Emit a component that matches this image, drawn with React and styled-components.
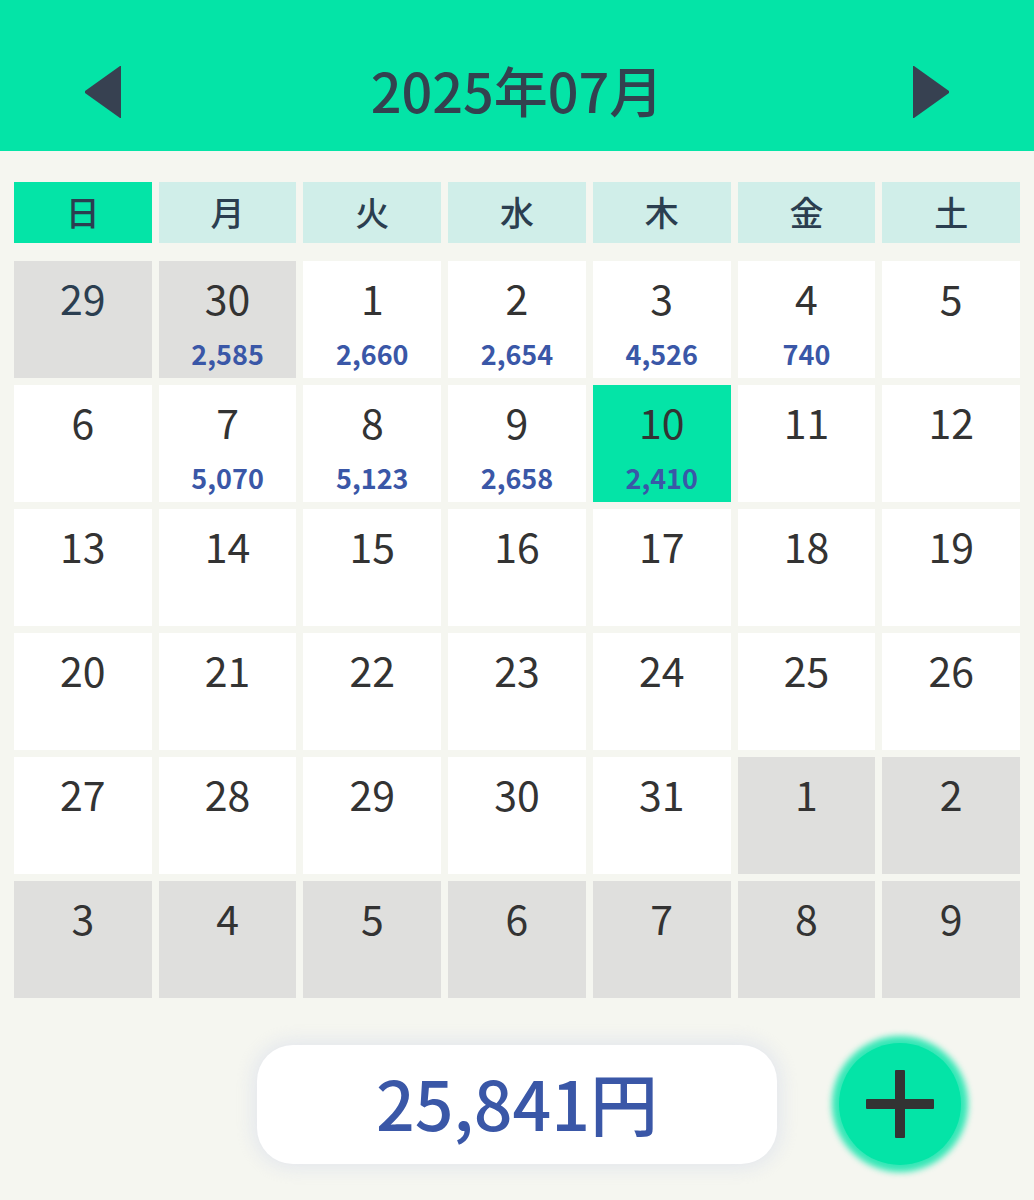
import styled, { createGlobalStyle } from "styled-components";

const GlobalStyle = createGlobalStyle`
  * {
    box-sizing: border-box;
  }
  body {
    margin: 0;
    background-color: #f5f6f0;
    font-family: "Noto Sans CJK JP", "Noto Sans", sans-serif;
    color: #333;
  }
`;

const Header = styled.header`
  display: flex;
  justify-content: space-between;
  align-items: center;
  padding: 50px 85px 18px;
  background-color: #04e4a7;
`;

const Title = styled.h1`
  margin: 0;
  padding-bottom: 3px;
  font-size: 54px;
  font-weight: 500;
  line-height: 80px;
  color: #33414f;
`;

const ArrowButton = styled.button`
  display: flex;
  padding: 0;
  border: none;
  background: none;
  color: #374151;
  cursor: pointer;
`;

const Calendar = styled.table`
  display: block;
  padding: 31px 14px 0;
`;

const WeekHead = styled.thead`
  display: block;
  margin-bottom: 18px;
`;

const Weeks = styled.tbody`
  display: grid;
  gap: 7px;
`;

const Row = styled.tr`
  display: grid;
  grid-template-columns: repeat(7, 1fr);
  gap: 7px;
`;

const Weekday = styled.th`
  padding: 1px 0 2px;
  font-size: 34px;
  font-weight: 500;
  line-height: 58px;
  color: #2b3e50;
  background-color: ${(props) => (props.$active ? "#04e4a7" : "#d0eee9")};
`;

const dayColors = {
  current: "#fff",
  outside: "#dfdfdd",
  selected: "#04e4a7",
};

const Day = styled.td`
  min-height: 117px;
  padding: 8px 0 2px;
  text-align: center;
  background-color: ${(props) => dayColors[props.$kind]};
`;

const DayNumber = styled.div`
  font-size: 41px;
  line-height: 56px;
  color: ${(props) => (props.$muted ? "#2b3e50" : "#333")};
`;

const Amount = styled.div`
  margin-top: 7px;
  font-size: 27px;
  font-weight: 700;
  line-height: 44px;
  color: #3a57a7;
`;

const Footer = styled.footer`
  display: grid;
  grid-template-columns: 1fr minmax(auto, 520px) 1fr;
  align-items: center;
  padding: 45px 0 36px;
`;

const Total = styled.output`
  grid-column: 2;
  padding: 12px 0 17px;
  border-radius: 36px;
  background-color: #fff;
  box-shadow: 0 0 18px 4px rgba(215, 220, 235, 0.6);
  text-align: center;
  font-size: 68px;
  font-weight: 500;
  line-height: 90px;
  color: #3a57a7;
`;

const AddButton = styled.button`
  display: flex;
  justify-content: center;
  align-items: center;
  width: 122px;
  height: 122px;
  margin-left: 62px;
  padding: 0;
  border: none;
  border-radius: 50%;
  background-color: #04e4a7;
  box-shadow: 0 0 6px 7px rgba(4, 228, 167, 0.8);
  color: #333;
  cursor: pointer;
`;

const weekdays = ["日", "月", "火", "水", "木", "金", "土"];

const amounts = {
  "6-30": "2,585",
  "7-1": "2,660",
  "7-2": "2,654",
  "7-3": "4,526",
  "7-4": "740",
  "7-7": "5,070",
  "7-8": "5,123",
  "7-9": "2,658",
  "7-10": "2,410",
};

// six weeks, starting from the Sunday on or before July 1st
const weeks = Array.from({ length: 6 }, (_, week) =>
  Array.from({ length: 7 }, (_, day) => {
    const date = new Date(2025, 5, 29 + week * 7 + day);
    const month = date.getMonth() + 1;
    const key = month + "-" + date.getDate();
    let kind = month === 7 ? "current" : "outside";
    if (key === "7-10") kind = "selected";
    return { key, kind, number: date.getDate(), amount: amounts[key] };
  })
);

export default function App() {
  return (
    <>
      <GlobalStyle />
      <Header>
        <ArrowButton type="button" aria-label="前の月">
          <svg width="36" height="52" viewBox="0 0 36 52" fill="currentColor">
            <path d="M35 0H36V52H35L0 27V25Z" />
          </svg>
        </ArrowButton>
        <Title>2025年07月</Title>
        <ArrowButton type="button" aria-label="次の月">
          <svg width="36" height="52" viewBox="0 0 36 52" fill="currentColor">
            <path d="M1 0H0V52H1L36 27V25Z" />
          </svg>
        </ArrowButton>
      </Header>
      <main>
        <Calendar>
          <WeekHead>
            <Row>
              {weekdays.map((name, i) => (
                <Weekday key={name} scope="col" $active={i === 0}>
                  {name}
                </Weekday>
              ))}
            </Row>
          </WeekHead>
          <Weeks>
            {weeks.map((week) => (
              <Row key={week[0].key}>
                {week.map((day) => (
                  <Day key={day.key} $kind={day.kind}>
                    <DayNumber $muted={day.key === "6-29"}>{day.number}</DayNumber>
                    {day.amount && <Amount>{day.amount}</Amount>}
                  </Day>
                ))}
              </Row>
            ))}
          </Weeks>
        </Calendar>
      </main>
      <Footer>
        <Total>25,841円</Total>
        <AddButton type="button" aria-label="追加">
          <svg width="68" height="68" viewBox="0 0 68 68" fill="currentColor">
            <rect x="29" y="0" width="10" height="68" rx="1" />
            <rect x="0" y="29" width="68" height="10" rx="1" />
          </svg>
        </AddButton>
      </Footer>
    </>
  );
}
